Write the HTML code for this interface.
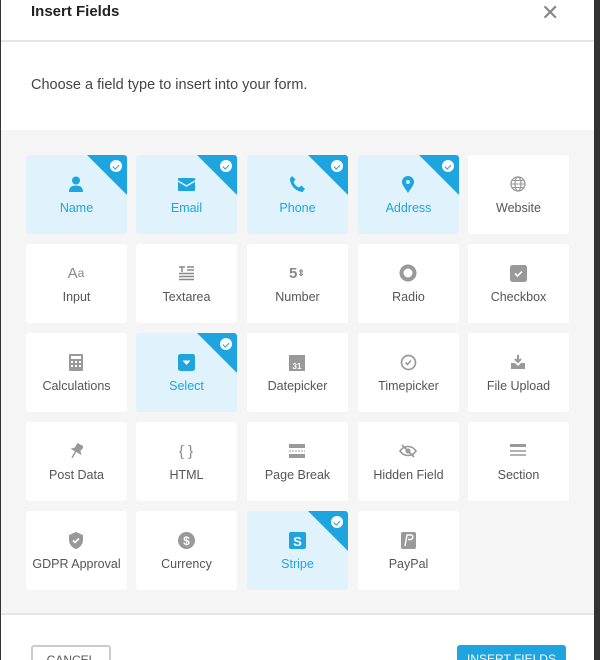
<!DOCTYPE html>
<html style="width:600px;height:660px;overflow:hidden"><head><meta charset="utf-8"><style>
*{margin:0;padding:0;box-sizing:border-box}
body{width:600px;height:660px;background:#333;font-family:"Liberation Sans",sans-serif;position:relative;overflow:hidden}
.m{position:absolute;left:1px;top:0;width:593px;height:660px;background:#fff;overflow:hidden}
.h{position:absolute;left:30px;top:3px;font-size:15px;font-weight:bold;color:#222}
.x{position:absolute;left:540px;top:0;font-size:22px;color:#888}
.d1{position:absolute;left:0;top:40px;width:593px;height:2px;background:#e6e6e6}
.p{position:absolute;left:30px;top:77px;font-size:14.5px;color:#444}
.g{position:absolute;left:0;top:130px;width:593px;height:485px;background:#f5f5f5;border-bottom:2px solid #e6e6e6}
.c{position:absolute;width:101px;height:79px;background:#fff;border-radius:3px;overflow:hidden;text-align:center;color:#555;font-size:12.5px}
.c.s{background:#e0f3fc;color:#1ea4de}
.c .l{position:absolute;left:0;right:0;top:46px}
.c .i{position:absolute;left:40px;top:19px;width:20px;height:20px;display:flex;align-items:center;justify-content:center}
.t{position:absolute;right:0;top:0;width:0;height:0;border-top:40px solid #1ea4de;border-left:40px solid transparent}
.k{position:absolute;right:5px;top:5px;width:12px;height:12px;border-radius:50%;background:#fff}
.k:after{content:"";position:absolute;left:4px;top:2.5px;width:2.5px;height:5px;border:solid #1ea4de;border-width:0 1.5px 1.5px 0;transform:rotate(45deg)}
.b1{position:absolute;left:30px;top:645px;width:80px;height:30px;border:2px solid #ccc;border-radius:3px;font-size:12px;color:#555;text-align:center;padding-top:6px}
.b2{position:absolute;left:456px;top:645px;width:109px;height:30px;background:#1ea4de;border-radius:3px;font-size:12px;color:#fff;text-align:center;padding-top:7px}
</style></head><body>
<div class="m">
<div class="h">Insert Fields</div>
<div class="x">✕</div>
<div class="d1"></div>
<div class="p">Choose a field type to insert into your form.</div>
<div class="g"></div>

<div class="c s" style="left:25px;top:155px"><div class="t"></div><div class="k"></div><div class="i"><svg width="16" height="16"><circle cx="8" cy="4.5" r="4" fill="#1ea4de"/><path d="M1 16c0-5 3-6.5 7-6.5s7 1.5 7 6.5z" fill="#1ea4de"/></svg></div><div class="l">Name</div></div>
<div class="c s" style="left:135px;top:155px"><div class="t"></div><div class="k"></div><div class="i"><svg width="17" height="13"><rect width="17" height="13" rx="1" fill="#1ea4de"/><path d="M0 3l8.5 5 8.5-5" stroke="#e0f3fc" fill="none" stroke-width="1.5"/></svg></div><div class="l">Email</div></div>
<div class="c s" style="left:246px;top:155px"><div class="t"></div><div class="k"></div><div class="i"><svg width="16" height="16"><path d="M3 0l3.5 3.5-2 2.5c1 2.5 3 4.5 5.5 5.5l2.5-2 3.5 3.5-2.5 3C6 15 1 9 1 2.5z" fill="#1ea4de"/></svg></div><div class="l">Phone</div></div>
<div class="c s" style="left:357px;top:155px"><div class="t"></div><div class="k"></div><div class="i"><svg width="12" height="17"><path d="M6 17C2 11 0 8.5 0 6a6 6 0 0112 0c0 2.5-2 5-6 11z" fill="#1ea4de"/><circle cx="6" cy="6" r="2" fill="#e0f3fc"/></svg></div><div class="l">Address</div></div>
<div class="c" style="left:467px;top:155px"><div class="i"><svg width="16" height="16"><circle cx="8" cy="8" r="7" fill="none" stroke="#999" stroke-width="1.3"/><ellipse cx="8" cy="8" rx="3" ry="7" fill="none" stroke="#999" stroke-width="1.2"/><path d="M1 8h14M2 4.5h12M2 11.5h12" stroke="#999"/></svg></div><div class="l">Website</div></div>

<div class="c" style="left:25px;top:244px"><div class="i" style="font-size:15px;color:#888">A<span style="font-size:12px">a</span></div><div class="l">Input</div></div>
<div class="c" style="left:135px;top:244px"><div class="i"><svg width="15" height="15"><path d="M0 1h6M3 1v5M8 1h7M8 4h7M0 7.5h15M0 10.5h15M0 13.5h15" stroke="#888" stroke-width="1.5"/></svg></div><div class="l">Textarea</div></div>
<div class="c" style="left:246px;top:244px"><div class="i" style="font-size:15px;font-weight:bold;color:#888">5<span style="font-size:9px">⇕</span></div><div class="l">Number</div></div>
<div class="c" style="left:357px;top:244px"><div class="i"><svg width="18" height="18"><circle cx="9" cy="9" r="6.5" fill="none" stroke="#999" stroke-width="4"/></svg></div><div class="l">Radio</div></div>
<div class="c" style="left:467px;top:244px"><div class="i"><svg width="17" height="17"><rect width="17" height="17" rx="2.5" fill="#999"/><path d="M5 8.5l2.5 2.5 4.5-4.5" stroke="#fff" stroke-width="1.6" fill="none"/></svg></div><div class="l">Checkbox</div></div>

<div class="c" style="left:25px;top:333px"><div class="i"><svg width="14" height="17"><rect width="14" height="17" rx="1" fill="#999"/><rect x="2" y="2" width="10" height="3" fill="#fff"/><path d="M2 7h2v2H2zM6 7h2v2H6zM10 7h2v2h-2zM2 11h2v2H2zM6 11h2v2H6zM10 11h2v2h-2z" fill="#fff"/></svg></div><div class="l">Calculations</div></div>
<div class="c s" style="left:135px;top:333px"><div class="t"></div><div class="k"></div><div class="i"><svg width="17" height="17"><rect width="17" height="17" rx="2.5" fill="#1ea4de"/><path d="M4.5 6.5h8L8.5 11z" fill="#fff"/></svg></div><div class="l">Select</div></div>
<div class="c" style="left:246px;top:333px"><div class="i"><svg width="16" height="18"><rect y="2" width="16" height="16" fill="#999"/><text x="8" y="16" font-size="8" font-weight="bold" fill="#fff" text-anchor="middle" font-family="Liberation Sans">31</text></svg></div><div class="l">Datepicker</div></div>
<div class="c" style="left:357px;top:333px"><div class="i"><svg width="17" height="17"><circle cx="8.5" cy="8.5" r="7" fill="none" stroke="#999" stroke-width="1.7"/><path d="M5.5 8.5l2 2 3.5-4" stroke="#999" stroke-width="1.6" fill="none"/></svg></div><div class="l">Timepicker</div></div>
<div class="c" style="left:467px;top:333px"><div class="i"><svg width="16" height="16"><path d="M8 1v7M5 5l3 3 3-3" stroke="#999" stroke-width="2" fill="none"/><path d="M1 9h4l3 3 3-3h4v6H1z" fill="#999"/></svg></div><div class="l">File Upload</div></div>

<div class="c" style="left:25px;top:422px"><div class="i"><svg width="14" height="16"><path d="M5 1h6l-1 5 2 2H3l2-2zM7 8v8" stroke="#999" fill="#999" stroke-width="1.5" transform="rotate(30 7 8)"/></svg></div><div class="l">Post Data</div></div>
<div class="c" style="left:135px;top:422px"><div class="i" style="font-size:15px;color:#888">{&nbsp;}</div><div class="l">HTML</div></div>
<div class="c" style="left:246px;top:422px"><div class="i"><svg width="16" height="14"><rect width="16" height="4" fill="#999"/><path d="M0 7h16" stroke="#999" stroke-dasharray="2 1"/><rect y="10" width="16" height="4" fill="#999"/></svg></div><div class="l">Page Break</div></div>
<div class="c" style="left:357px;top:422px"><div class="i"><svg width="18" height="14"><path d="M1 7c4-6 12-6 16 0-4 6-12 6-16 0z" fill="none" stroke="#999" stroke-width="1.6"/><circle cx="9" cy="7" r="2.5" fill="#999"/><path d="M3 1l12 12" stroke="#999" stroke-width="1.6"/></svg></div><div class="l">Hidden Field</div></div>
<div class="c" style="left:467px;top:422px"><div class="i"><svg width="16" height="14"><rect width="16" height="3" fill="#999"/><path d="M0 7h16M0 11h16" stroke="#999" stroke-width="1.4"/></svg></div><div class="l">Section</div></div>

<div class="c" style="left:25px;top:511px"><div class="i"><svg width="16" height="17"><path d="M8 0l7 3v5c0 4-3 8-7 9-4-1-7-5-7-9V3z" fill="#999"/><path d="M5 8.5l2 2 4-4" stroke="#fff" stroke-width="1.6" fill="none"/></svg></div><div class="l">GDPR Approval</div></div>
<div class="c" style="left:135px;top:511px"><div class="i"><svg width="17" height="17"><circle cx="8.5" cy="8.5" r="8.5" fill="#999"/><text x="8.5" y="13" font-size="12" font-weight="bold" fill="#fff" text-anchor="middle" font-family="Liberation Sans">$</text></svg></div><div class="l">Currency</div></div>
<div class="c s" style="left:246px;top:511px"><div class="t"></div><div class="k"></div><div class="i"><svg width="17" height="17"><rect width="17" height="17" rx="2" fill="#1ea4de"/><text x="8.5" y="14" font-size="13" font-weight="bold" fill="#fff" text-anchor="middle" font-family="Liberation Sans">S</text></svg></div><div class="l">Stripe</div></div>
<div class="c" style="left:357px;top:511px"><div class="i"><svg width="15" height="17"><rect width="15" height="17" rx="2" fill="#999"/><path d="M4 14l2-11h4c2.5 0 2.5 4.5-1 4.5H7" stroke="#fff" stroke-width="1.4" fill="none"/></svg></div><div class="l">PayPal</div></div>

<div class="b1">CANCEL</div>
<div class="b2">INSERT FIELDS</div>
</div>
</body></html>
